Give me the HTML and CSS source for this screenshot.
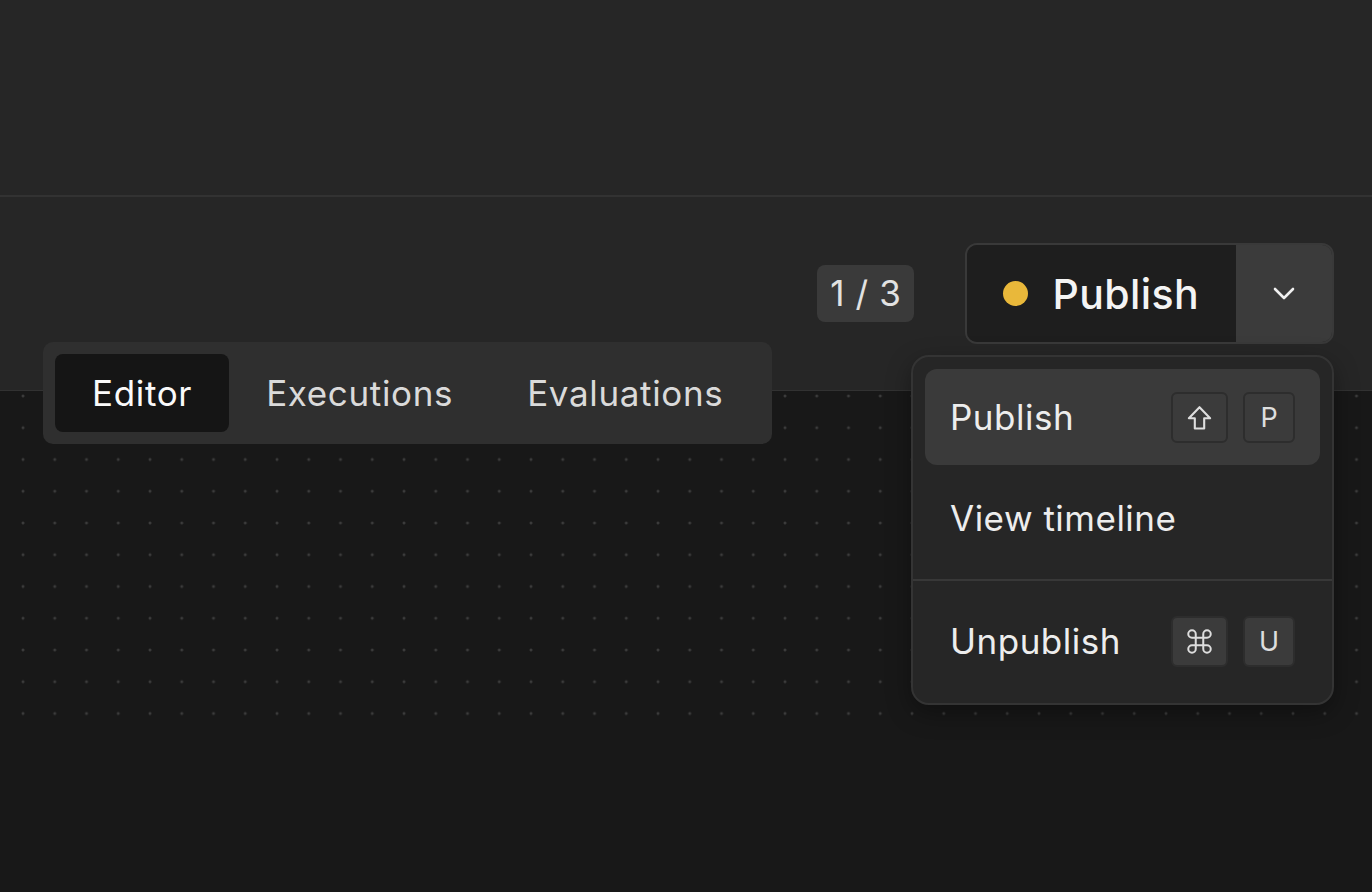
FILE: index.html
```html
<!DOCTYPE html>
<html lang="en">
  <head>
    <meta charset="UTF-8" />
    <meta name="viewport" content="width=device-width, initial-scale=1.0" />
    <title>Workflow Editor</title>
    <link rel="stylesheet" href="styles.css">
  </head>
  <body>
    <!-- App chrome above the workflow header -->
    <div class="top-bar"></div>

    <!-- Header with version counter and publish controls -->
    <div class="header">
      <span class="version-count">1 / 3</span>

      <div class="publish-wrap">
        <div class="publish-btn">
          <button class="publish-main">
            <span class="status-dot"></span>Publish
          </button>
          <button class="publish-toggle">
            <svg width="24" height="14" viewBox="0 0 24 14" fill="none" stroke="currentColor" stroke-width="2.6" stroke-linecap="round" stroke-linejoin="round">
              <path d="M3 2l9 9 9-9" />
            </svg>
          </button>
        </div>

        <!-- Dropdown menu, open -->
        <div class="publish-menu">
          <div class="menu-item active">
            <span>Publish</span>
            <span class="keys">
              <kbd class="kbd-icon">
                <!-- shift key -->
                <svg width="25" height="25" viewBox="4 4 16 16" fill="none" stroke="currentColor" stroke-width="1.35" stroke-linejoin="round">
                  <path d="M9 19v-6.5H5.2L12 5.4l6.8 7.1H15V19H9z" />
                </svg>
              </kbd>
              <kbd>P</kbd>
            </span>
          </div>
          <div class="menu-item">
            <span>View timeline</span>
          </div>
          <div class="menu-divider"></div>
          <div class="menu-item">
            <span>Unpublish</span>
            <span class="keys">
              <kbd class="kbd-icon">
                <!-- command key -->
                <svg width="25" height="25" viewBox="2 2 20 20" fill="none" stroke="currentColor" stroke-width="1.6" stroke-linecap="round" stroke-linejoin="round">
                  <path d="M15 6v12a3 3 0 1 0 3-3H6a3 3 0 1 0 3 3V6a3 3 0 1 0-3 3h12a3 3 0 1 0-3-3" />
                </svg>
              </kbd>
              <kbd>U</kbd>
            </span>
          </div>
        </div>
      </div>

      <!-- View switcher sitting on the header border -->
      <div class="tabs">
        <button class="tab active">Editor</button>
        <button class="tab">Executions</button>
        <button class="tab">Evaluations</button>
      </div>
    </div>

    <!-- Dotted workflow canvas -->
    <div class="canvas">
      <div class="canvas-grid"></div>
    </div>
  </body>
</html>
```

FILE: styles.css
```css
body {
  margin: 0;
  padding: 0;
  height: 892px;
  overflow: hidden;
  display: flex;
  flex-direction: column;
  background-color: #181818;
  font-family: Inter, "Noto Sans", sans-serif;
  color: #ececec;
}

button {
  font-family: inherit;
  border: none;
  margin: 0;
  cursor: pointer;
}

/* Top chrome */
.top-bar {
  height: 195px;
  flex-shrink: 0;
  background-color: #262626;
  border-bottom: 2px solid #323232;
}

/* Header */
.header {
  position: relative;
  height: 194px;
  flex-shrink: 0;
  box-sizing: border-box;
  display: flex;
  align-items: center;
  justify-content: flex-end;
  gap: 51px;
  padding-right: 38px;
  background-color: #262626;
  border-bottom: 1px solid #323232;
}

.version-count {
  height: 57px;
  line-height: 57px;
  padding: 0 13px;
  border-radius: 8px;
  background-color: #3a3a3a;
  color: #e2e2e2;
  font-size: 35px;
  letter-spacing: 0.6px;
}

/* Split publish button */
.publish-wrap {
  position: relative;
}

.publish-btn {
  display: flex;
  height: 101px;
  box-sizing: border-box;
  border: 2px solid #393939;
  border-radius: 12px;
  overflow: hidden;
}

.publish-main {
  display: flex;
  align-items: center;
  gap: 24px;
  padding: 0 37px 0 36px;
  background-color: #1e1e1e;
  color: #f4f4f4;
  font-size: 41px;
  font-weight: 500;
  letter-spacing: 0.4px;
}

.status-dot {
  width: 25px;
  height: 25px;
  border-radius: 50%;
  background-color: #e9b83a;
}

.publish-toggle {
  width: 96px;
  display: flex;
  align-items: center;
  justify-content: center;
  background-color: #3b3b3b;
  color: #f0f0f0;
}

/* Dropdown menu */
.publish-menu {
  position: absolute;
  top: calc(100% + 11px);
  right: 0;
  z-index: 2;
  width: 423px;
  box-sizing: border-box;
  display: flex;
  flex-direction: column;
  gap: 5px;
  padding: 12px 12px 14px;
  background-color: #262626;
  border: 2px solid #343434;
  border-radius: 18px;
  box-shadow: 0 8px 24px rgba(0, 0, 0, 0.35);
}

.menu-item {
  height: 96px;
  display: flex;
  align-items: center;
  justify-content: space-between;
  padding: 0 25px 0 25px;
  border-radius: 12px;
  font-size: 35px;
  letter-spacing: 0.5px;
  color: #ededed;
}

.menu-item.active {
  background-color: #3a3a3a;
}

.menu-divider {
  height: 2px;
  margin: 8px -12px 7px;
  background-color: #383838;
}

.keys {
  display: flex;
  gap: 15px;
}

kbd {
  min-width: 52px;
  height: 51px;
  box-sizing: border-box;
  display: inline-flex;
  align-items: center;
  justify-content: center;
  border: 2px solid #2d2d2d;
  border-radius: 6px;
  background-color: #3b3b3b;
  color: #dedede;
  font-family: inherit;
  font-size: 27px;
  letter-spacing: 0;
}

.kbd-icon {
  width: 57px;
}

/* Tabs */
.tabs {
  position: absolute;
  left: 43px;
  top: 145px;
  z-index: 1;
  display: flex;
  padding: 12px;
  border-radius: 10px;
  background-color: #2f2f2f;
}

.tab {
  height: 78px;
  padding: 0 37px;
  border-radius: 8px;
  background: transparent;
  color: #dadada;
  font-size: 35px;
  letter-spacing: 0.65px;
}

.tab.active {
  background-color: #151515;
  color: #fafafa;
}

/* Canvas */
.canvas {
  flex: 1;
}

.canvas-grid {
  height: 335px;
  background-image: radial-gradient(circle at 5px 5px, #3c3c3c 1.1px, transparent 1.8px);
  background-size: 31.75px 31.75px;
  background-position: 18px 0;
}
```
